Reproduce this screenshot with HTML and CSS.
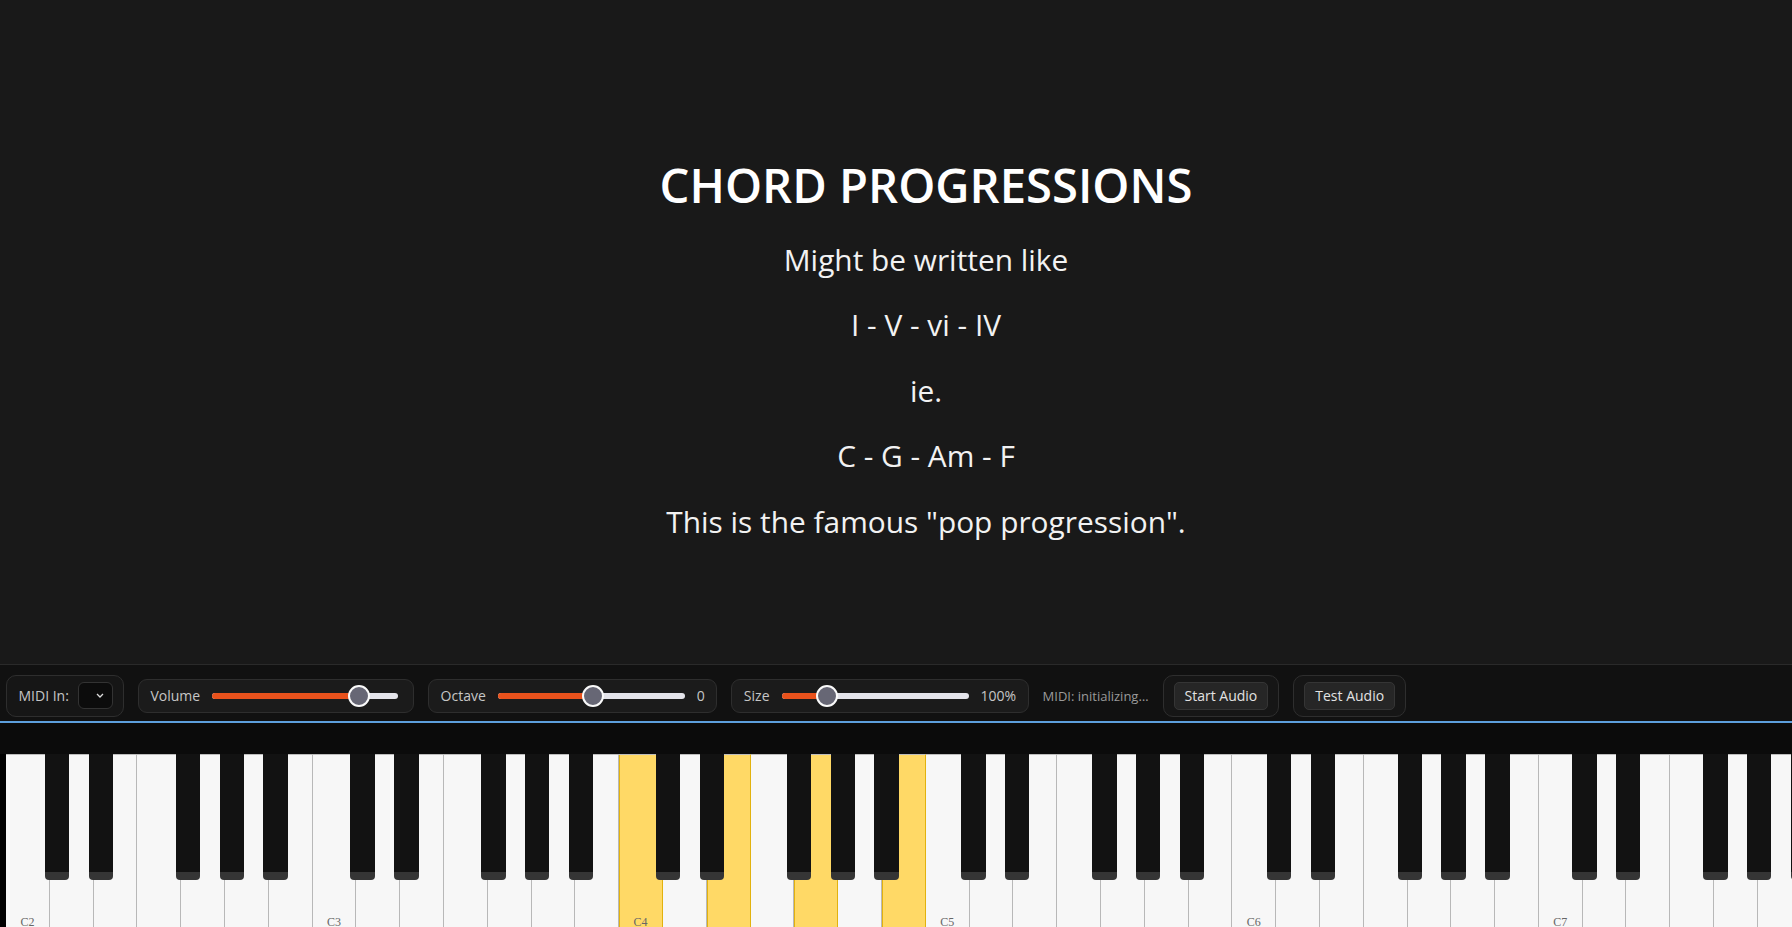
FILE: index.html
```html
<!DOCTYPE html>
<html lang="en">
<head>
<meta charset="utf-8">
<title>Chord Progressions</title>
<link rel="stylesheet" href="styles.css">
</head>
<body>
<main class="slide">
  <h2 class="title">CHORD PROGRESSIONS</h2>
  <p>Might be written like</p>
  <p>I - V - vi - IV</p>
  <p>ie.</p>
  <p>C - G - Am - F</p>
  <p>This is the famous "pop progression".</p>
</main>

<div class="toolbar">
  <div class="group tall">
    <span class="lbl">MIDI In:</span>
    <div class="select">
      <svg width="8" height="5" viewBox="0 0 8 5"><polyline points="1,1 4,4 7,1" fill="none" stroke="#ddd" stroke-width="1.3"/></svg>
    </div>
  </div>
  <div class="group vol">
    <span class="lbl">Volume</span>
    <div class="slider w186"><div class="fill" style="width:146px"></div><div class="thumb" style="left:136px"></div></div>
  </div>
  <div class="group">
    <span class="lbl">Octave</span>
    <div class="slider"><div class="fill" style="width:94px"></div><div class="thumb" style="left:84px"></div></div>
    <span class="val">0</span>
  </div>
  <div class="group">
    <span class="lbl">Size</span>
    <div class="slider"><div class="fill" style="width:44px"></div><div class="thumb" style="left:34px"></div></div>
    <span class="val">100%</span>
  </div>
  <span class="status">MIDI: initializing…</span>
  <div class="group tall"><button class="btn">Start Audio</button></div>
  <div class="group tall"><button class="btn">Test Audio</button></div>
</div>

<div class="keyboard">
  <div class="keys">
    <div class="wk"><span class="nl">C2</span></div><div class="wk"></div><div class="wk"></div><div class="wk"></div><div class="wk"></div><div class="wk"></div><div class="wk"></div>
    <div class="wk"><span class="nl">C3</span></div><div class="wk"></div><div class="wk"></div><div class="wk"></div><div class="wk"></div><div class="wk"></div><div class="wk"></div>
    <div class="wk on"><span class="nl">C4</span></div><div class="wk"></div><div class="wk on"></div><div class="wk"></div><div class="wk on"></div><div class="wk"></div><div class="wk on"></div>
    <div class="wk"><span class="nl">C5</span></div><div class="wk"></div><div class="wk"></div><div class="wk"></div><div class="wk"></div><div class="wk"></div><div class="wk"></div>
    <div class="wk"><span class="nl">C6</span></div><div class="wk"></div><div class="wk"></div><div class="wk"></div><div class="wk"></div><div class="wk"></div><div class="wk"></div>
    <div class="wk"><span class="nl">C7</span></div><div class="wk"></div><div class="wk"></div><div class="wk"></div><div class="wk"></div><div class="wk"></div><div class="wk"></div>
    <div class="wk"></div>

    <div class="bk" style="left:45.00px"></div>
    <div class="bk" style="left:88.64px"></div>
    <div class="bk" style="left:175.92px"></div>
    <div class="bk" style="left:219.56px"></div>
    <div class="bk" style="left:263.20px"></div>
    <div class="bk" style="left:350.48px"></div>
    <div class="bk" style="left:394.12px"></div>
    <div class="bk" style="left:481.40px"></div>
    <div class="bk" style="left:525.04px"></div>
    <div class="bk" style="left:568.68px"></div>
    <div class="bk" style="left:655.96px"></div>
    <div class="bk" style="left:699.60px"></div>
    <div class="bk" style="left:786.88px"></div>
    <div class="bk" style="left:830.52px"></div>
    <div class="bk" style="left:874.16px"></div>
    <div class="bk" style="left:961.44px"></div>
    <div class="bk" style="left:1005.08px"></div>
    <div class="bk" style="left:1092.36px"></div>
    <div class="bk" style="left:1136.00px"></div>
    <div class="bk" style="left:1179.64px"></div>
    <div class="bk" style="left:1266.92px"></div>
    <div class="bk" style="left:1310.56px"></div>
    <div class="bk" style="left:1397.84px"></div>
    <div class="bk" style="left:1441.48px"></div>
    <div class="bk" style="left:1485.12px"></div>
    <div class="bk" style="left:1572.40px"></div>
    <div class="bk" style="left:1616.04px"></div>
    <div class="bk" style="left:1703.32px"></div>
    <div class="bk" style="left:1746.96px"></div>
    <div class="bk" style="left:1790.60px"></div>
  </div>
</div>
</body>
</html>
```

FILE: styles.css
```css
html, body {
  margin: 0;
  padding: 0;
  height: 100%;
  overflow: hidden;
  background: #0b0b0b;
}

body {
  font-family: "Open Sans", "Noto Sans", sans-serif;
}

.slide {
  height: 664px;
  box-sizing: border-box;
  background: #191919;
  padding: 157px 0 0 60px;
  display: flex;
  flex-direction: column;
  align-items: center;
  gap: 24.6px;
  color: #fff;
}

.title {
  margin: 0 0 1.1px 0;
  font-size: 47.2px;
  font-weight: 600;
  line-height: 56px;
  letter-spacing: 0;
}

.slide p {
  margin: 0;
  font-size: 29.85px;
  line-height: 41px;
  color: #f2f2f2;
}

/* toolbar */
.toolbar {
  height: 59px;
  box-sizing: border-box;
  background: #111111;
  border-top: 1px solid #2a2a2a;
  border-bottom: 2px solid #5d9fdc;
  padding: 9px 6px 4px 6px;
  display: flex;
  align-items: center;
  gap: 14px;
}

.group {
  height: 34px;
  box-sizing: border-box;
  display: flex;
  align-items: center;
  gap: 12px;
  padding: 0 11.5px;
  background: #1b1b1b;
  border: 1px solid #2e2e2e;
  border-radius: 9px;
  font-size: 14px;
  color: #c6c6c6;
}

.group.tall {
  height: 42px;
  padding: 0 10px;
  gap: 9px;
  border-radius: 10px;
  background: #161616;
}

.group.tall .lbl { margin-left: 1.5px; }

.group.vol { padding-right: 15px; }

.lbl, .val {
  white-space: nowrap;
  line-height: 18px;
}

.select {
  width: 35px;
  height: 27px;
  box-sizing: border-box;
  background: #0c0c0c;
  border: 1px solid #333;
  border-radius: 6px;
  display: flex;
  align-items: center;
  justify-content: flex-end;
  padding-right: 8px;
}

.select svg { display: block; }

.slider {
  position: relative;
  width: 187px;
  height: 6px;
  border-radius: 3px;
  background: #e4e4ea;
}

.slider.w186 { width: 186px; }

.fill {
  height: 6px;
  border-radius: 3px;
  background: #e9521c;
}

.thumb {
  position: absolute;
  top: -8px;
  width: 22px;
  height: 22px;
  box-sizing: border-box;
  border-radius: 50%;
  background: #676775;
  border: 2px solid #fafafa;
}

.status {
  font-size: 13px;
  color: #9a9a9a;
  white-space: nowrap;
}

.btn {
  height: 28px;
  box-sizing: border-box;
  padding: 0 10px;
  font-family: "Open Sans", "Noto Sans", sans-serif;
  font-size: 14px;
  color: #e2e2e2;
  background: #262626;
  border: 1px solid #353535;
  border-radius: 5px;
  white-space: nowrap;
}

/* keyboard */
.keyboard {
  padding-top: 31px;
  background: #0b0b0b;
}

.keys {
  position: relative;
  display: flex;
  padding-left: 6px;
  background: #000;
  overflow: hidden;
}

.wk {
  flex: none;
  width: 43.8px;
  height: 180px;
  box-sizing: border-box;
  background: #f7f7f7;
  border-top: 1px solid #bdbdbd;
  border-right: 1px solid #b8b8b8;
  display: flex;
  align-items: flex-end;
  justify-content: center;
  padding-bottom: 5px;
}

.wk.on {
  background: #ffd966;
  border-right-color: #e2b20e;
  box-shadow: inset 1px 0 0 #e2b20e;
}

.nl {
  font-family: "Liberation Serif", "DejaVu Serif", serif;
  font-size: 12px;
  line-height: 13px;
  color: #666;
}

.bk {
  position: absolute;
  top: 0;
  width: 24.4px;
  height: 126px;
  box-sizing: border-box;
  background: #121212;
  border-bottom: 8px solid #353535;
  border-radius: 0 0 4px 4px;
}
```
